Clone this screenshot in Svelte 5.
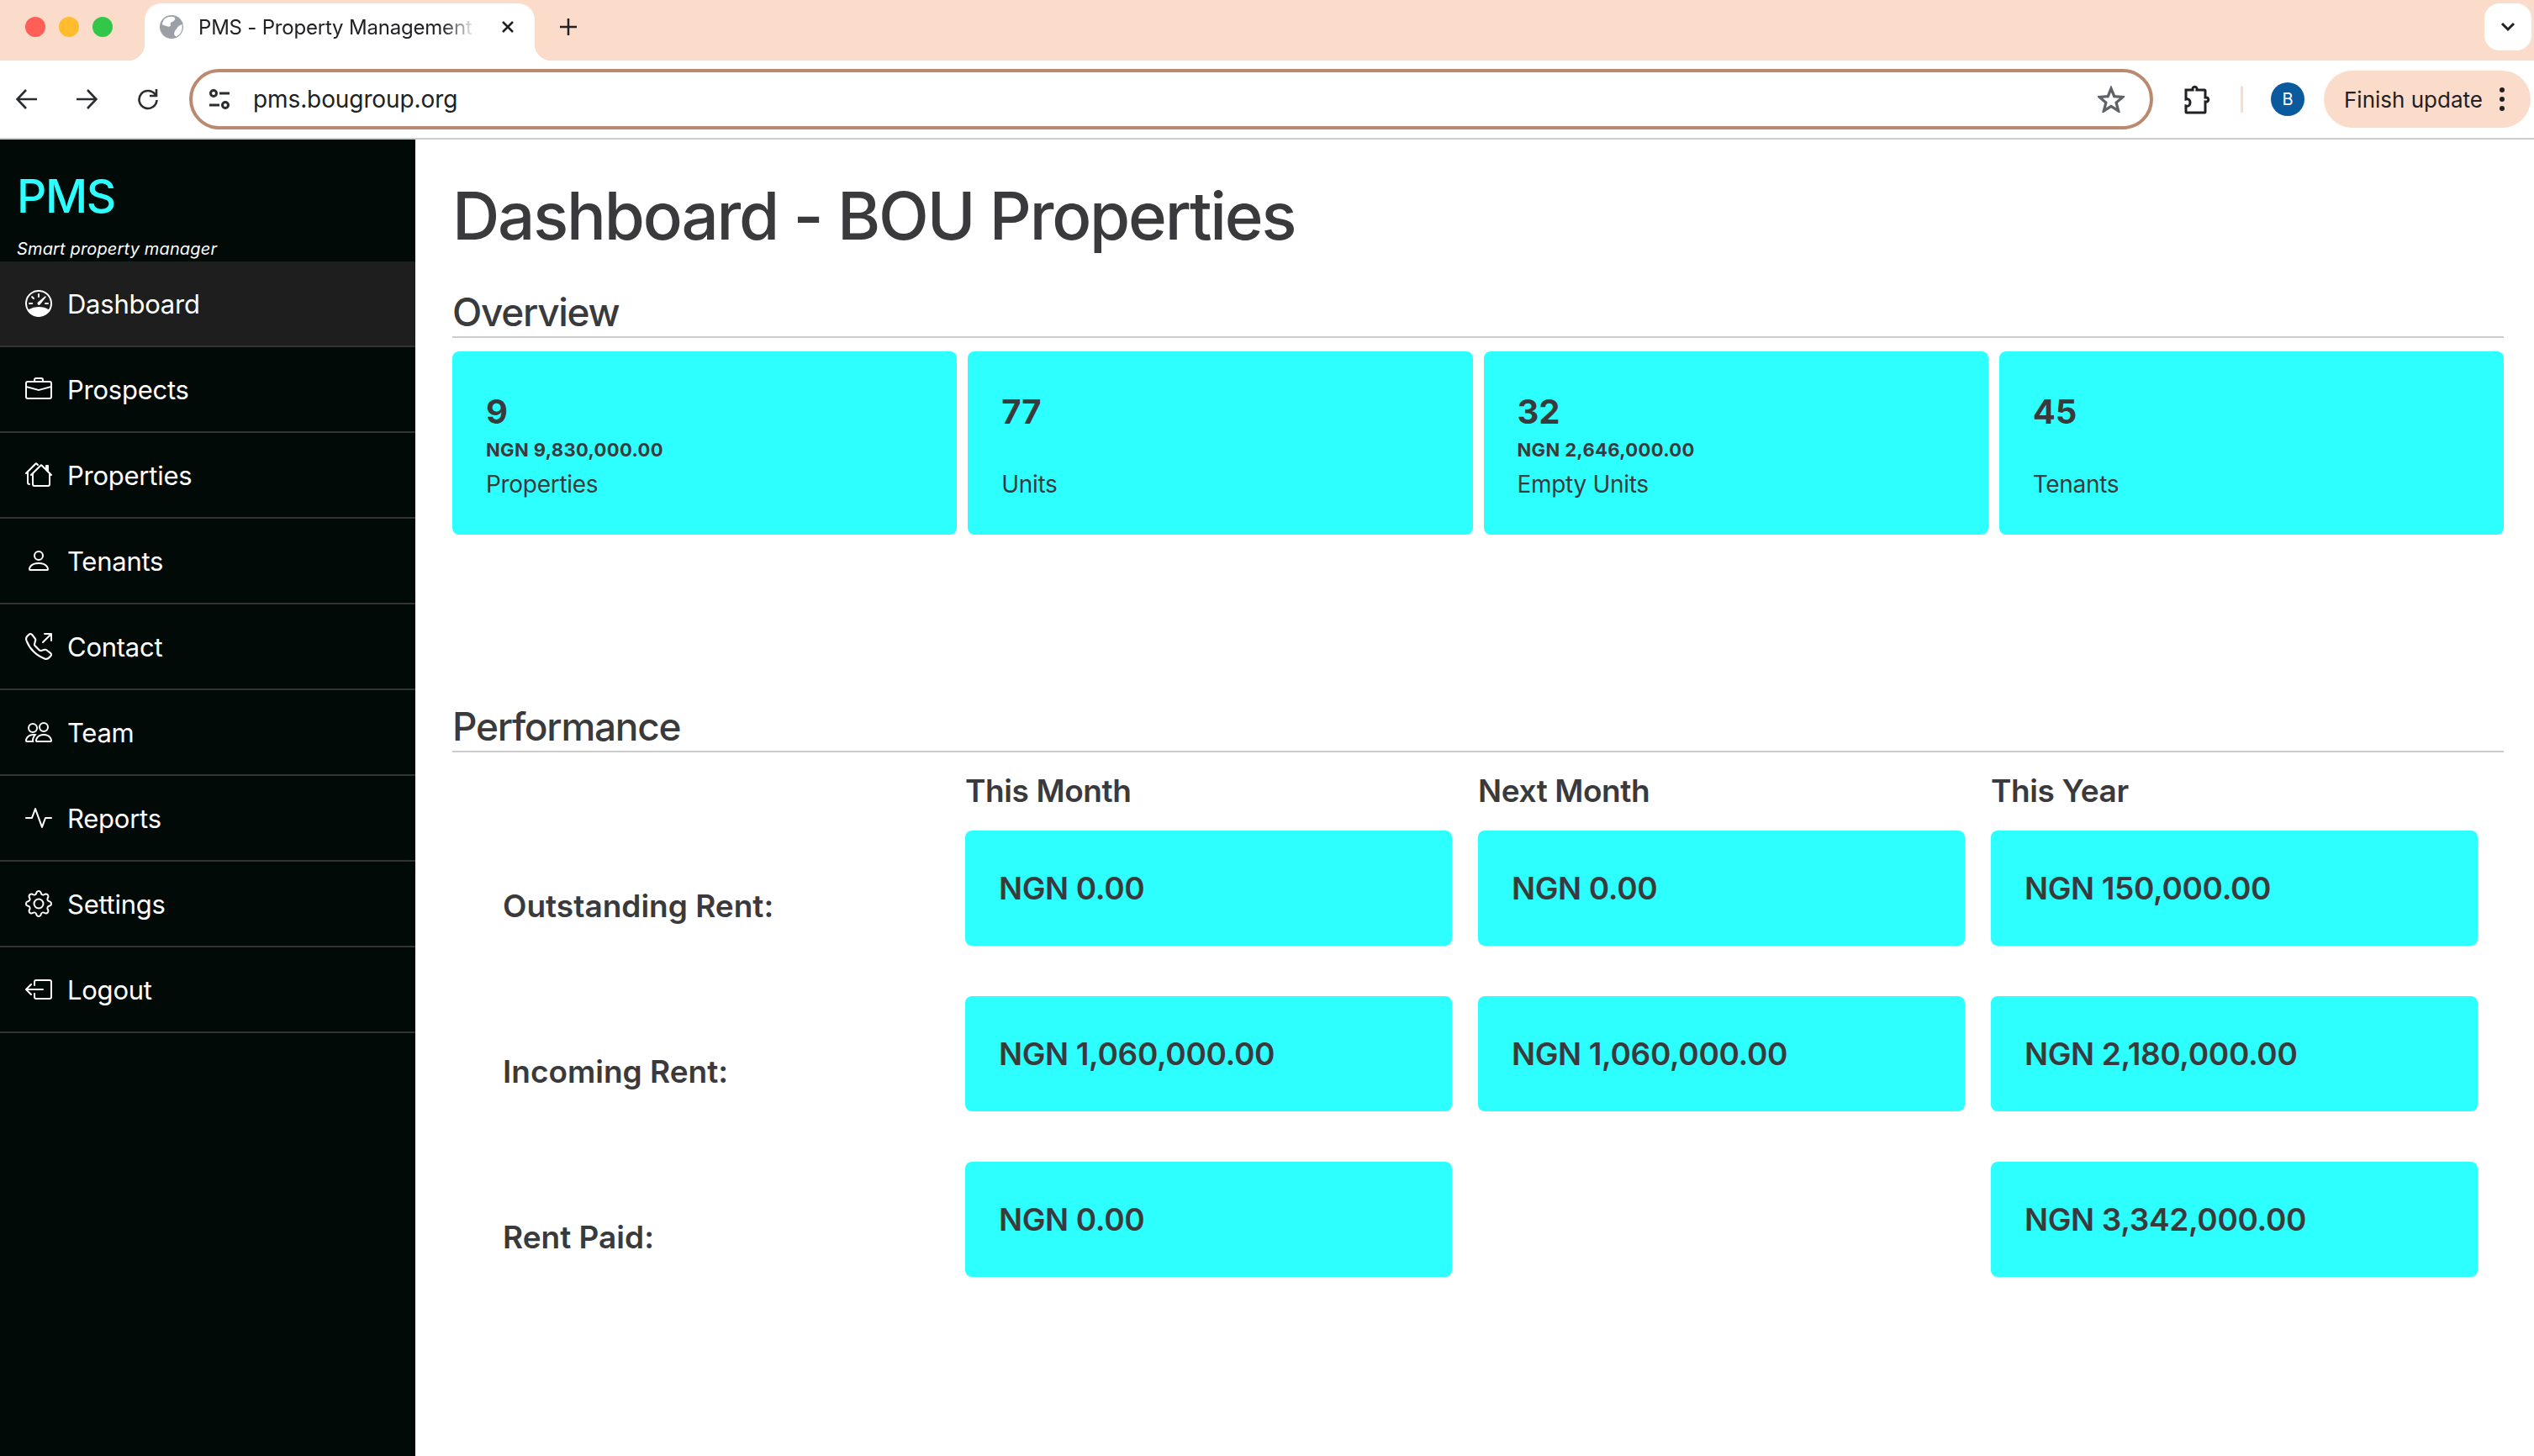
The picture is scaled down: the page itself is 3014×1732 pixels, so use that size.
<script>
  const menu = [
    { label: "Dashboard", active: true, paths: [
      "M8 2a.5.5 0 0 1 .5.5V4a.5.5 0 0 1-1 0V2.5A.5.5 0 0 1 8 2zM3.732 3.732a.5.5 0 0 1 .707 0l.915.914a.5.5 0 1 1-.708.708l-.914-.915a.5.5 0 0 1 0-.707zM2 8a.5.5 0 0 1 .5-.5h1.586a.5.5 0 0 1 0 1H2.5A.5.5 0 0 1 2 8zm9.5 0a.5.5 0 0 1 .5-.5h1.5a.5.5 0 0 1 0 1H12a.5.5 0 0 1-.5-.5zm.754-4.246a.389.389 0 0 0-.527-.02L7.547 7.31A.91.91 0 1 0 8.85 8.569l3.434-4.297a.389.389 0 0 0-.029-.518z",
      "M6.664 15.889A8 8 0 1 1 9.336.11a8 8 0 0 1-2.672 15.78zm-4.665-4.283A11.945 11.945 0 0 1 8 10c2.186 0 4.236.585 6.001 1.606a7 7 0 1 0-12.002 0z"
    ] },
    { label: "Prospects", paths: [
      "M6.5 1A1.5 1.5 0 0 0 5 2.5V3H1.5A1.5 1.5 0 0 0 0 4.5v8A1.5 1.5 0 0 0 1.5 14h13a1.5 1.5 0 0 0 1.5-1.5v-8A1.5 1.5 0 0 0 14.5 3H11v-.5A1.5 1.5 0 0 0 9.5 1h-3zm0 1h3a.5.5 0 0 1 .5.5V3H6v-.5a.5.5 0 0 1 .5-.5zm1.886 6.914L15 7.151V12.5a.5.5 0 0 1-.5.5h-13a.5.5 0 0 1-.5-.5V7.15l6.614 1.764a1.5 1.5 0 0 0 .772 0zM1.5 4h13a.5.5 0 0 1 .5.5v1.616L8.129 7.948a.5.5 0 0 1-.258 0L1 6.116V4.5a.5.5 0 0 1 .5-.5z"
    ] },
    { label: "Properties", paths: [
      "M5.793 1a1 1 0 0 1 1.414 0l.647.646a.5.5 0 1 1-.708.708L6.5 1.707 2 6.207V12.5a.5.5 0 0 0 .5.5.5.5 0 0 1 0 1A1.5 1.5 0 0 1 1 12.5V7.207l-.146.147a.5.5 0 0 1-.708-.708L5.793 1Zm3 1a1 1 0 0 1 1.414 0L12 3.793V2.5a.5.5 0 0 1 .5-.5h1a.5.5 0 0 1 .5.5v3.293l1.854 1.853a.5.5 0 0 1-.708.708L15 8.207V13.5a1.5 1.5 0 0 1-1.5 1.5h-8A1.5 1.5 0 0 1 4 13.5V8.207l-.146.147a.5.5 0 1 1-.708-.708L8.793 2Zm.707.707L5 7.207V13.5a.5.5 0 0 0 .5.5h8a.5.5 0 0 0 .5-.5V7.207l-4.5-4.5Z"
    ] },
    { label: "Tenants", paths: [
      "M8 8a3 3 0 1 0 0-6 3 3 0 0 0 0 6Zm2-3a2 2 0 1 1-4 0 2 2 0 0 1 4 0Zm4 8c0 1-1 1-1 1H3s-1 0-1-1 1-4 6-4 6 3 6 4Zm-1-.004c-.001-.246-.154-.986-.832-1.664C11.516 10.68 10.289 10 8 10c-2.29 0-3.516.68-4.168 1.332-.678.678-.83 1.418-.832 1.664h10Z"
    ] },
    { label: "Contact", paths: [
      "M3.654 1.328a.678.678 0 0 0-1.015-.063L1.605 2.3c-.483.484-.661 1.169-.45 1.77a17.568 17.568 0 0 0 4.168 6.608 17.569 17.569 0 0 0 6.608 4.168c.601.211 1.286.033 1.77-.45l1.034-1.034a.678.678 0 0 0-.063-1.015l-2.307-1.794a.678.678 0 0 0-.58-.122l-2.19.547a1.745 1.745 0 0 1-1.657-.459L5.482 8.062a1.745 1.745 0 0 1-.46-1.657l.548-2.19a.678.678 0 0 0-.122-.58L3.654 1.328zM1.884.511a1.745 1.745 0 0 1 2.612.163L6.29 2.98c.329.423.445.974.315 1.494l-.547 2.19a.678.678 0 0 0 .178.643l2.457 2.457a.678.678 0 0 0 .644.178l2.189-.547a1.745 1.745 0 0 1 1.494.315l2.306 1.794c.829.645.905 1.87.163 2.611l-1.034 1.034c-.74.74-1.846 1.065-2.877.702a18.634 18.634 0 0 1-7.01-4.42 18.634 18.634 0 0 1-4.42-7.009c-.362-1.03-.037-2.137.703-2.877L1.885.511zM11 .5a.5.5 0 0 1 .5-.5h4a.5.5 0 0 1 .5.5v4a.5.5 0 0 1-1 0V1.707l-4.146 4.147a.5.5 0 0 1-.708-.708L14.293 1H11.5a.5.5 0 0 1-.5-.5z"
    ] },
    { label: "Team", paths: [
      "M15 14s1 0 1-1-1-4-5-4-5 3-5 4 1 1 1 1h8Zm-7.978-1A.261.261 0 0 1 7 12.996c.001-.264.167-1.03.76-1.72C8.312 10.629 9.282 10 11 10c1.717 0 2.687.63 3.24 1.276.593.69.758 1.457.76 1.72l-.008.002a.274.274 0 0 1-.014.002H7.022ZM11 7a2 2 0 1 0 0-4 2 2 0 0 0 0 4Zm3-2a3 3 0 1 1-6 0 3 3 0 0 1 6 0ZM6.936 9.28a5.88 5.88 0 0 0-1.23-.247A7.35 7.35 0 0 0 5 9c-4 0-5 3-5 4 0 .667.333 1 1 1h4.216A2.238 2.238 0 0 1 5 13c0-1.01.377-2.042 1.09-2.904.243-.294.526-.569.846-.816ZM4.92 10A5.493 5.493 0 0 0 4 13H1c0-.26.164-1.03.76-1.724.545-.636 1.492-1.256 3.16-1.275ZM1.5 5.5a3 3 0 1 1 6 0 3 3 0 0 1-6 0Zm3-2a2 2 0 1 0 0 4 2 2 0 0 0 0-4Z"
    ] },
    { label: "Reports", paths: [
      "M6 2a.5.5 0 0 1 .47.33L10 12.036l1.53-4.208A.5.5 0 0 1 12 7.5h3.5a.5.5 0 0 1 0 1h-3.15l-1.88 5.17a.5.5 0 0 1-.94 0L6 3.964 4.47 8.171A.5.5 0 0 1 4 8.5H.5a.5.5 0 0 1 0-1h3.15l1.88-5.17A.5.5 0 0 1 6 2Z"
    ] },
    { label: "Settings", paths: [
      "M8 4.754a3.246 3.246 0 1 0 0 6.492 3.246 3.246 0 0 0 0-6.492zM5.754 8a2.246 2.246 0 1 1 4.492 0 2.246 2.246 0 0 1-4.492 0z",
      "M9.796 1.343c-.527-1.79-3.065-1.79-3.592 0l-.094.319a.873.873 0 0 1-1.255.52l-.292-.16c-1.64-.892-3.433.902-2.54 2.541l.159.292a.873.873 0 0 1-.52 1.255l-.319.094c-1.79.527-1.79 3.065 0 3.592l.319.094a.873.873 0 0 1 .52 1.255l-.16.292c-.892 1.64.901 3.434 2.541 2.54l.292-.159a.873.873 0 0 1 1.255.52l.094.319c.527 1.79 3.065 1.79 3.592 0l.094-.319a.873.873 0 0 1 1.255-.52l.292.16c1.64.893 3.434-.902 2.54-2.541l-.159-.292a.873.873 0 0 1 .52-1.255l.319-.094c1.79-.527 1.79-3.065 0-3.592l-.319-.094a.873.873 0 0 1-.52-1.255l.16-.292c.893-1.64-.902-3.433-2.541-2.54l-.292.159a.873.873 0 0 1-1.255-.52l-.094-.319zm-2.633.283c.246-.835 1.428-.835 1.674 0l.094.319a1.873 1.873 0 0 0 2.693 1.115l.291-.16c.764-.415 1.6.42 1.184 1.185l-.159.292a1.873 1.873 0 0 0 1.116 2.692l.318.094c.835.246.835 1.428 0 1.674l-.319.094a1.873 1.873 0 0 0-1.115 2.693l.16.291c.415.764-.42 1.6-1.185 1.184l-.291-.159a1.873 1.873 0 0 0-2.693 1.116l-.094.318c-.246.835-1.428.835-1.674 0l-.094-.319a1.873 1.873 0 0 0-2.692-1.115l-.292.16c-.764.415-1.6-.42-1.184-1.185l.159-.291A1.873 1.873 0 0 0 1.945 8.93l-.319-.094c-.835-.246-.835-1.428 0-1.674l.319-.094A1.873 1.873 0 0 0 3.06 4.377l-.16-.292c-.415-.764.42-1.6 1.185-1.184l.292.159a1.873 1.873 0 0 0 2.692-1.115l.094-.319z"
    ] },
    { label: "Logout", paths: [
      "M6 12.5a.5.5 0 0 0 .5.5h8a.5.5 0 0 0 .5-.5v-9a.5.5 0 0 0-.5-.5h-8a.5.5 0 0 0-.5.5v2a.5.5 0 0 1-1 0v-2A1.5 1.5 0 0 1 6.5 2h8A1.5 1.5 0 0 1 16 3.5v9a1.5 1.5 0 0 1-1.5 1.5h-8A1.5 1.5 0 0 1 5 12.5v-2a.5.5 0 0 1 1 0v2z",
      "M.146 8.354a.5.5 0 0 1 0-.708l3-3a.5.5 0 1 1 .708.708L1.707 7.5H10.5a.5.5 0 0 1 0 1H1.707l2.147 2.146a.5.5 0 0 1-.708.708l-3-3z"
    ] }
  ];

  const overview = [
    { value: "9", amount: "NGN 9,830,000.00", label: "Properties" },
    { value: "77", amount: "", label: "Units" },
    { value: "32", amount: "NGN 2,646,000.00", label: "Empty Units" },
    { value: "45", amount: "", label: "Tenants" }
  ];

  const performance = [
    { label: "Outstanding Rent:", cells: ["NGN 0.00", "NGN 0.00", "NGN 150,000.00"] },
    { label: "Incoming Rent:", cells: ["NGN 1,060,000.00", "NGN 1,060,000.00", "NGN 2,180,000.00"] },
    { label: "Rent Paid:", cells: ["NGN 0.00", "", "NGN 3,342,000.00"] }
  ];
</script>

<div class="browser">
  <div class="tabstrip">
    <div class="lights">
      <span class="light red"></span>
      <span class="light amber"></span>
      <span class="light green"></span>
    </div>
    <div class="tab">
      <svg class="favicon" viewBox="0 0 28 28">
        <circle cx="14" cy="14" r="14" fill="#9aa0a6" />
        <path d="M9 2.500c3-1 7-1 9 .5 1 2-1 4-3 5-2 .5-3 2-2 4 0 2-3 2-5 1-2-.5-4-1-5-2 0-3 2-7 6-8.500ZM26.500 11c1 6-1 12-7 14.500-2-1-3-3-2-5 0-2 2-3 3-5 1-2 3.500-4 6-4.500Z" fill="#fff" />
      </svg>
      <span class="tab-title">PMS - Property Management</span>
      <svg class="tab-close" viewBox="0 0 16 16"><path d="M2 2l12 12M14 2L2 14" /></svg>
    </div>
    <svg class="new-tab" viewBox="0 0 20 20"><path d="M10 0v20M0 10h20" /></svg>
    <div class="tab-search">
      <svg viewBox="0 0 18 12"><path d="M2 2l7 7 7-7" /></svg>
    </div>
  </div>

  <div class="toolbar">
    <svg class="nav first" viewBox="0 0 26 26"><path d="M25 13H2M12 2L1.500 13 12 24" /></svg>
    <svg class="nav" viewBox="0 0 26 26"><path d="M1 13h23M14 2l10.500 11L14 24" /></svg>
    <svg class="nav reload" viewBox="0 0 26 26"><path d="M22 8a10.500 10.500 0 1 0 1.500 6M23 1v8h-8" /></svg>
    <div class="omnibox">
      <svg class="tune" viewBox="0 0 24 24">
        <circle cx="5" cy="5" r="3.500" />
        <path d="M12 5h12M0 19h12" />
        <circle cx="19" cy="19" r="3.500" />
      </svg>
      <span class="url">pms.bougroup.org</span>
      <svg class="star" viewBox="0 0 34 34"><path d="M17 3.500l4 10 10.800.8-8.300 7 2.700 10.500L17 26l-9.200 5.800 2.700-10.500-8.300-7 10.800-.8Z" /></svg>
    </div>
    <svg class="puzzle" viewBox="0 0 32 36">
      <path d="M3 7h8c-1-5 6-5 5 0h9c1 0 1 1 1 1v8c5-1 5 6 0 5v12s0 1-1 1H4c-1 0-1-1-1-1v-7c4 1 5-2 5-4s-1-5-5-4V8s0-1 0-1Z" />
    </svg>
    <span class="divider"></span>
    <span class="avatar">B</span>
    <div class="update">
      <span>Finish update</span>
      <span class="dots"><i></i><i></i><i></i></span>
    </div>
  </div>

  <div class="page">
    <aside class="sidebar">
      <div class="brand">
        <h2>PMS</h2>
        <em>Smart property manager</em>
      </div>
      <nav>
        {#each menu as item}
          <div class="menu-item" class:active={item.active}>
            <svg viewBox="0 0 16 16" fill="currentColor">
              {#each item.paths as d}
                <path {d} />
              {/each}
            </svg>
            <span>{item.label}</span>
          </div>
        {/each}
      </nav>
    </aside>

    <main>
      <h1>Dashboard - BOU Properties</h1>

      <h3 class="overview-title">Overview</h3>
      <div class="stats">
        {#each overview as card}
          <div class="stat">
            <div class="value">{card.value}</div>
            <div class="amount">{card.amount}</div>
            <div class="stat-label">{card.label}</div>
          </div>
        {/each}
      </div>

      <h3 class="performance-title">Performance</h3>
      <div class="perf perf-head">
        <div></div>
        <div class="col-head">This Month</div>
        <div class="col-head">Next Month</div>
        <div class="col-head">This Year</div>
      </div>
      <div class="perf perf-body">
        {#each performance as row}
          <div class="row-label">{row.label}</div>
          {#each row.cells as cell}
            {#if cell}
              <div class="cell">{cell}</div>
            {:else}
              <div></div>
            {/if}
          {/each}
        {/each}
      </div>
    </main>
  </div>
</div>

<style>
  :global(body) {
    margin: 0;
    background: #fff;
    overflow: hidden;
  }

  .browser {
    width: 3014px;
    height: 1732px;
    display: flex;
    flex-direction: column;
    font-family: Inter, "Liberation Sans", sans-serif;
    color: #3a3a3c;
    overflow: hidden;
  }

  h1, h2, h3 {
    margin: 0;
  }

  /* browser chrome */
  .tabstrip {
    height: 72px;
    flex: none;
    display: flex;
    align-items: flex-start;
    background: #fbdccb;
  }

  .lights {
    display: flex;
    gap: 16px;
    margin: 20px 0 0 30px;
    width: 142px;
  }

  .light {
    width: 24px;
    height: 24px;
    border-radius: 50%;
  }

  .red { background: #ff5f57; }
  .amber { background: #febc2e; }
  .green { background: #32c748; }

  .tab {
    position: relative;
    width: 464px;
    height: 68px;
    margin-top: 4px;
    background: #fff;
    border-radius: 20px 20px 0 0;
    display: flex;
    align-items: center;
    padding: 0 0 12px 18px;
    box-sizing: border-box;
  }

  .tab::before,
  .tab::after {
    content: "";
    position: absolute;
    bottom: 0;
    width: 20px;
    height: 20px;
  }

  .tab::before {
    left: -20px;
    background: radial-gradient(circle at 0 0, #fbdccb 20px, #fff 20.500px);
  }

  .tab::after {
    right: -20px;
    background: radial-gradient(circle at 100% 0, #fbdccb 20px, #fff 20.500px);
  }

  .favicon {
    width: 28px;
    height: 28px;
    flex: none;
  }

  .tab-title {
    width: 330px;
    margin-left: 18px;
    font-size: 24px;
    letter-spacing: -0.2px;
    color: #202124;
    white-space: nowrap;
    overflow: hidden;
    mask-image: linear-gradient(to right, #000 88%, transparent 100%);
  }

  .tab-close {
    width: 16px;
    height: 16px;
    margin-left: 30px;
    fill: none;
    stroke: #202124;
    stroke-width: 2.500;
  }

  .new-tab {
    width: 20px;
    height: 20px;
    margin: 22px 0 0 30px;
    fill: none;
    stroke: #202124;
    stroke-width: 2.500;
  }

  .tab-search {
    margin: 4px 3px 0 auto;
    width: 56px;
    height: 56px;
    background: #fff;
    border-radius: 18px;
    display: flex;
    align-items: center;
    justify-content: center;
  }

  .tab-search svg {
    width: 18px;
    height: 12px;
    fill: none;
    stroke: #202124;
    stroke-width: 3;
  }

  .toolbar {
    height: 92px;
    flex: none;
    display: flex;
    align-items: center;
    background: #fff;
    border-bottom: 2px solid #ccc;
    border-top-right-radius: 12px;
  }

  .nav {
    width: 26px;
    height: 26px;
    margin-left: 45px;
    fill: none;
    stroke: #2b2c2f;
    stroke-width: 2.600;
  }

  .nav.first {
    margin-left: 19px;
  }

  .nav.reload {
    margin-left: 47px;
  }

  .omnibox {
    width: 2336px;
    height: 72px;
    margin-left: 36px;
    box-sizing: border-box;
    border: 4px solid #b98a70;
    border-radius: 36px;
    display: flex;
    align-items: center;
    padding: 0 30px 0 20px;
  }

  .tune {
    width: 24px;
    height: 24px;
    fill: none;
    stroke: #2b2c2f;
    stroke-width: 3;
  }

  .url {
    margin-left: 28px;
    font-size: 28px;
    letter-spacing: -0.1px;
    color: #202124;
  }

  .star {
    width: 32px;
    height: 32px;
    margin-left: auto;
    fill: none;
    stroke: #5f6368;
    stroke-width: 3.500;
  }

  .puzzle {
    width: 32px;
    height: 36px;
    margin-left: 36px;
    fill: none;
    stroke: #202124;
    stroke-width: 3;
  }

  .divider {
    width: 3px;
    height: 32px;
    margin-left: 36px;
    background: #fbdccb;
    border-radius: 2px;
  }

  .avatar {
    width: 40px;
    height: 40px;
    margin-left: 33px;
    border-radius: 50%;
    background: #0b5a9e;
    color: #fff;
    font-size: 20px;
    display: flex;
    align-items: center;
    justify-content: center;
  }

  .update {
    width: 246px;
    height: 68px;
    margin-left: 23px;
    box-sizing: border-box;
    border-radius: 34px;
    background: #fbdccb;
    color: #202124;
    font-size: 26px;
    display: flex;
    align-items: center;
    padding-left: 24px;
  }

  .dots {
    display: flex;
    flex-direction: column;
    gap: 5px;
    margin-left: 20px;
  }

  .dots i {
    width: 6px;
    height: 6px;
    border-radius: 50%;
    background: #202124;
  }

  /* app */
  .page {
    flex: 1;
    display: flex;
    min-height: 0;
  }

  .sidebar {
    width: 494px;
    flex: none;
    background: #020a08;
    color: #fff;
  }

  .brand {
    height: 145px;
    box-sizing: border-box;
    padding: 33px 0 0 20px;
  }

  .brand h2 {
    font-size: 55px;
    line-height: 68px;
    font-weight: 500;
    letter-spacing: -1.400px;
    color: #2dffff;
  }

  .brand em {
    display: block;
    margin-top: 17px;
    font-size: 20px;
    line-height: 24px;
    letter-spacing: 0.15px;
  }

  .menu-item {
    height: 102px;
    box-sizing: border-box;
    border-bottom: 2px solid #333;
    display: flex;
    align-items: center;
    padding: 0 0 0 30px;
    gap: 18px;
    font-size: 31px;
    letter-spacing: -0.25px;
  }

  .menu-item.active {
    background: #1e1e1e;
  }

  .menu-item svg {
    width: 32px;
    height: 32px;
    flex: none;
  }

  main {
    flex: 1;
    padding: 0 36px 0 44px;
    min-width: 0;
  }

  h1 {
    margin-top: 43px;
    font-size: 78px;
    line-height: 96px;
    font-weight: 500;
    letter-spacing: -2.200px;
  }

  h3 {
    font-size: 46px;
    line-height: 58px;
    font-weight: 500;
    letter-spacing: -1.300px;
    border-bottom: 2px solid #ccc;
  }

  .overview-title {
    margin-top: 37px;
  }

  .stats {
    display: grid;
    grid-template-columns: repeat(4, 1fr);
    gap: 13px;
    margin-top: 16px;
  }

  .stat {
    height: 218px;
    box-sizing: border-box;
    padding: 48px 40px 0;
    background: #2dffff;
    border-radius: 8px;
  }

  .value {
    font-size: 40px;
    line-height: 48px;
    font-weight: 700;
  }

  .amount {
    height: 28px;
    margin-top: 7px;
    font-size: 22px;
    line-height: 28px;
    font-weight: 700;
    letter-spacing: 0.35px;
  }

  .stat-label {
    margin-top: 10px;
    font-size: 28px;
    line-height: 34px;
    letter-spacing: -0.3px;
  }

  .performance-title {
    margin-top: 199px;
  }

  .perf {
    display: grid;
    grid-template-columns: 519px repeat(3, 579px);
    column-gap: 31px;
    margin-left: 60px;
  }

  .perf-head {
    margin-top: 23px;
  }

  .perf-body {
    grid-auto-rows: 137px;
    row-gap: 60px;
    margin-top: 24px;
  }

  .col-head {
    font-size: 37px;
    line-height: 46px;
    font-weight: 600;
    letter-spacing: -0.4px;
  }

  .row-label {
    padding-top: 67px;
    font-size: 37px;
    line-height: 46px;
    font-weight: 600;
  }

  .cell {
    display: flex;
    align-items: center;
    padding-left: 40px;
    background: #2dffff;
    border-radius: 8px;
    font-size: 37px;
    font-weight: 600;
    letter-spacing: -0.35px;
  }
</style>
